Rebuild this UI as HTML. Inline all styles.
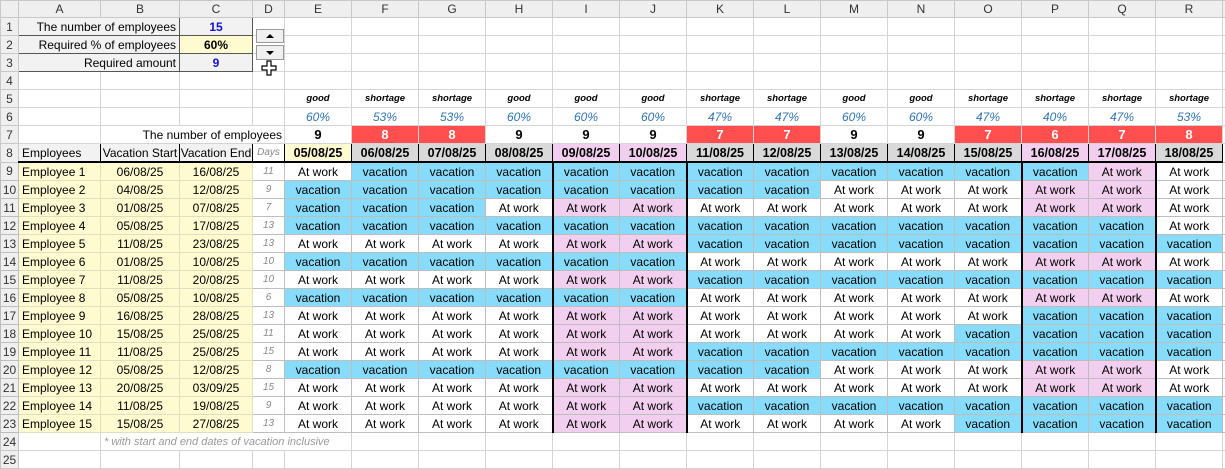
<!DOCTYPE html>
<html><head><meta charset="utf-8"><style>
body{margin:0;background:#fff;font-family:"Liberation Sans",Arial,sans-serif;overflow:hidden;width:1225px;height:457px;position:relative}
table{border-collapse:collapse;table-layout:fixed;position:absolute;left:0;top:0;width:1225px}
td{height:17px;padding:0;border:1px solid #d4d4d4;font-size:12px;text-align:center;white-space:nowrap;overflow:hidden;line-height:16px;color:#000}
tr.h td{height:16px;background:#efefef;color:#333;font-size:12px;border-color:#c8c8c8}
td.rh{background:#efefef;color:#333;text-align:center;padding:0;font-size:12px;border-color:#c8c8c8}
.v{background:#87dcfb}
.p{background:#f2cfee}
.y{background:#fffbd0}
.g{background:#f2f2f2}
.gd{background:#d9d9d9;font-weight:bold;font-size:12.5px}
.pd{background:#f2cfee;font-weight:bold;font-size:12.5px}
.yd{background:#fffbd0;font-weight:bold;font-size:12.5px}
.r{background:#ff4f4f;color:#fff;font-weight:bold;font-size:13px}
.n{font-weight:bold;font-size:13px}
.lab{font-weight:bold;font-style:italic;font-size:9.5px}
.pc{font-style:italic;color:#2f75b5;font-size:12px}
.dy{font-style:italic;color:#888;font-size:10px}
.emp td{border-color:#bdbdbd}
.emp td.y{border-color:#e0e0c0}
.emp td:nth-child(10),.emp td:nth-child(12),.emp td:nth-child(17),.emp td:nth-child(19){border-left:2px solid #000}
.b8 td{border-top:1px solid #000;border-bottom:2px solid #000;border-left:1px solid #000;border-right:1px solid #000}
.b8 td.rh{border:1px solid #c8c8c8}
.lft{text-align:left;padding-left:3px}
.rt{text-align:right;padding-right:3px}
.bx{border:1px solid #555}
</style></head><body>
<table>
<colgroup><col style="width:18px"><col style="width:82px"><col style="width:79px"><col style="width:73px"><col style="width:32px">
<col style="width:67px"><col style="width:67px"><col style="width:67px"><col style="width:67px"><col style="width:67px"><col style="width:67px"><col style="width:67px"><col style="width:67px"><col style="width:67px"><col style="width:67px"><col style="width:67px"><col style="width:67px"><col style="width:67px"><col style="width:67px"><col style="width:3px"></colgroup>
<tr class="h"><td></td><td>A</td><td>B</td><td>C</td><td>D</td><td>E</td><td>F</td><td>G</td><td>H</td><td>I</td><td>J</td><td>K</td><td>L</td><td>M</td><td>N</td><td>O</td><td>P</td><td>Q</td><td>R</td><td></td></tr>
<tr><td class="rh">1</td><td colspan="2" class="g rt bx">The number of employees</td><td class="g bx" style="color:#1010d0;font-weight:bold">15</td><td></td><td></td><td></td><td></td><td></td><td></td><td></td><td></td><td></td><td></td><td></td><td></td><td></td><td></td><td></td><td></td></tr>
<tr><td class="rh">2</td><td colspan="2" class="g rt bx">Required % of employees</td><td class="y bx" style="font-weight:bold">60%</td><td></td><td></td><td></td><td></td><td></td><td></td><td></td><td></td><td></td><td></td><td></td><td></td><td></td><td></td><td></td><td></td></tr>
<tr><td class="rh">3</td><td colspan="2" class="g rt bx">Required amount</td><td class="g bx" style="color:#1010d0;font-weight:bold">9</td><td></td><td></td><td></td><td></td><td></td><td></td><td></td><td></td><td></td><td></td><td></td><td></td><td></td><td></td><td></td><td></td></tr>
<tr><td class="rh">4</td><td></td><td></td><td></td><td></td><td></td><td></td><td></td><td></td><td></td><td></td><td></td><td></td><td></td><td></td><td></td><td></td><td></td><td></td><td></td></tr>
<tr><td class="rh">5</td><td></td><td></td><td></td><td></td><td class="lab">good</td><td class="lab">shortage</td><td class="lab">shortage</td><td class="lab">good</td><td class="lab">good</td><td class="lab">good</td><td class="lab">shortage</td><td class="lab">shortage</td><td class="lab">good</td><td class="lab">good</td><td class="lab">shortage</td><td class="lab">shortage</td><td class="lab">shortage</td><td class="lab">shortage</td><td></td></tr>
<tr><td class="rh">6</td><td></td><td></td><td></td><td></td><td class="pc">60%</td><td class="pc">53%</td><td class="pc">53%</td><td class="pc">60%</td><td class="pc">60%</td><td class="pc">60%</td><td class="pc">47%</td><td class="pc">47%</td><td class="pc">60%</td><td class="pc">60%</td><td class="pc">47%</td><td class="pc">40%</td><td class="pc">47%</td><td class="pc">53%</td><td></td></tr>
<tr><td class="rh">7</td><td></td><td colspan="3" class="rt" style="padding-right:2px">The number of employees</td><td class="n">9</td><td class="r">8</td><td class="r">8</td><td class="n">9</td><td class="n">9</td><td class="n">9</td><td class="r">7</td><td class="r">7</td><td class="n">9</td><td class="n">9</td><td class="r">7</td><td class="r">6</td><td class="r">7</td><td class="r">8</td><td></td></tr>
<tr class="b8"><td class="rh">8</td><td class="lft g">Employees</td><td class="g">Vacation Start</td><td class="g">Vacation End</td><td class="dy" style="background:#fff">Days</td><td class="yd">05/08/25</td><td class="gd">06/08/25</td><td class="gd">07/08/25</td><td class="gd">08/08/25</td><td class="pd">09/08/25</td><td class="pd">10/08/25</td><td class="gd">11/08/25</td><td class="gd">12/08/25</td><td class="gd">13/08/25</td><td class="gd">14/08/25</td><td class="gd">15/08/25</td><td class="pd">16/08/25</td><td class="pd">17/08/25</td><td class="gd">18/08/25</td><td style="border:none"></td></tr>
<tr class="emp"><td class="rh">9</td><td class="y lft">Employee 1</td><td class="y">06/08/25</td><td class="y">16/08/25</td><td class="dy">11</td><td>At work</td><td class="v">vacation</td><td class="v">vacation</td><td class="v">vacation</td><td class="v">vacation</td><td class="v">vacation</td><td class="v">vacation</td><td class="v">vacation</td><td class="v">vacation</td><td class="v">vacation</td><td class="v">vacation</td><td class="v">vacation</td><td class="p">At work</td><td>At work</td><td></td></tr>
<tr class="emp"><td class="rh">10</td><td class="y lft">Employee 2</td><td class="y">04/08/25</td><td class="y">12/08/25</td><td class="dy">9</td><td class="v">vacation</td><td class="v">vacation</td><td class="v">vacation</td><td class="v">vacation</td><td class="v">vacation</td><td class="v">vacation</td><td class="v">vacation</td><td class="v">vacation</td><td>At work</td><td>At work</td><td>At work</td><td class="p">At work</td><td class="p">At work</td><td>At work</td><td></td></tr>
<tr class="emp"><td class="rh">11</td><td class="y lft">Employee 3</td><td class="y">01/08/25</td><td class="y">07/08/25</td><td class="dy">7</td><td class="v">vacation</td><td class="v">vacation</td><td class="v">vacation</td><td>At work</td><td class="p">At work</td><td class="p">At work</td><td>At work</td><td>At work</td><td>At work</td><td>At work</td><td>At work</td><td class="p">At work</td><td class="p">At work</td><td>At work</td><td></td></tr>
<tr class="emp"><td class="rh">12</td><td class="y lft">Employee 4</td><td class="y">05/08/25</td><td class="y">17/08/25</td><td class="dy">13</td><td class="v">vacation</td><td class="v">vacation</td><td class="v">vacation</td><td class="v">vacation</td><td class="v">vacation</td><td class="v">vacation</td><td class="v">vacation</td><td class="v">vacation</td><td class="v">vacation</td><td class="v">vacation</td><td class="v">vacation</td><td class="v">vacation</td><td class="v">vacation</td><td>At work</td><td></td></tr>
<tr class="emp"><td class="rh">13</td><td class="y lft">Employee 5</td><td class="y">11/08/25</td><td class="y">23/08/25</td><td class="dy">13</td><td>At work</td><td>At work</td><td>At work</td><td>At work</td><td class="p">At work</td><td class="p">At work</td><td class="v">vacation</td><td class="v">vacation</td><td class="v">vacation</td><td class="v">vacation</td><td class="v">vacation</td><td class="v">vacation</td><td class="v">vacation</td><td class="v">vacation</td><td></td></tr>
<tr class="emp"><td class="rh">14</td><td class="y lft">Employee 6</td><td class="y">01/08/25</td><td class="y">10/08/25</td><td class="dy">10</td><td class="v">vacation</td><td class="v">vacation</td><td class="v">vacation</td><td class="v">vacation</td><td class="v">vacation</td><td class="v">vacation</td><td>At work</td><td>At work</td><td>At work</td><td>At work</td><td>At work</td><td class="p">At work</td><td class="p">At work</td><td>At work</td><td></td></tr>
<tr class="emp"><td class="rh">15</td><td class="y lft">Employee 7</td><td class="y">11/08/25</td><td class="y">20/08/25</td><td class="dy">10</td><td>At work</td><td>At work</td><td>At work</td><td>At work</td><td class="p">At work</td><td class="p">At work</td><td class="v">vacation</td><td class="v">vacation</td><td class="v">vacation</td><td class="v">vacation</td><td class="v">vacation</td><td class="v">vacation</td><td class="v">vacation</td><td class="v">vacation</td><td></td></tr>
<tr class="emp"><td class="rh">16</td><td class="y lft">Employee 8</td><td class="y">05/08/25</td><td class="y">10/08/25</td><td class="dy">6</td><td class="v">vacation</td><td class="v">vacation</td><td class="v">vacation</td><td class="v">vacation</td><td class="v">vacation</td><td class="v">vacation</td><td>At work</td><td>At work</td><td>At work</td><td>At work</td><td>At work</td><td class="p">At work</td><td class="p">At work</td><td>At work</td><td></td></tr>
<tr class="emp"><td class="rh">17</td><td class="y lft">Employee 9</td><td class="y">16/08/25</td><td class="y">28/08/25</td><td class="dy">13</td><td>At work</td><td>At work</td><td>At work</td><td>At work</td><td class="p">At work</td><td class="p">At work</td><td>At work</td><td>At work</td><td>At work</td><td>At work</td><td>At work</td><td class="v">vacation</td><td class="v">vacation</td><td class="v">vacation</td><td></td></tr>
<tr class="emp"><td class="rh">18</td><td class="y lft">Employee 10</td><td class="y">15/08/25</td><td class="y">25/08/25</td><td class="dy">11</td><td>At work</td><td>At work</td><td>At work</td><td>At work</td><td class="p">At work</td><td class="p">At work</td><td>At work</td><td>At work</td><td>At work</td><td>At work</td><td class="v">vacation</td><td class="v">vacation</td><td class="v">vacation</td><td class="v">vacation</td><td></td></tr>
<tr class="emp"><td class="rh">19</td><td class="y lft">Employee 11</td><td class="y">11/08/25</td><td class="y">25/08/25</td><td class="dy">15</td><td>At work</td><td>At work</td><td>At work</td><td>At work</td><td class="p">At work</td><td class="p">At work</td><td class="v">vacation</td><td class="v">vacation</td><td class="v">vacation</td><td class="v">vacation</td><td class="v">vacation</td><td class="v">vacation</td><td class="v">vacation</td><td class="v">vacation</td><td></td></tr>
<tr class="emp"><td class="rh">20</td><td class="y lft">Employee 12</td><td class="y">05/08/25</td><td class="y">12/08/25</td><td class="dy">8</td><td class="v">vacation</td><td class="v">vacation</td><td class="v">vacation</td><td class="v">vacation</td><td class="v">vacation</td><td class="v">vacation</td><td class="v">vacation</td><td class="v">vacation</td><td>At work</td><td>At work</td><td>At work</td><td class="p">At work</td><td class="p">At work</td><td>At work</td><td></td></tr>
<tr class="emp"><td class="rh">21</td><td class="y lft">Employee 13</td><td class="y">20/08/25</td><td class="y">03/09/25</td><td class="dy">15</td><td>At work</td><td>At work</td><td>At work</td><td>At work</td><td class="p">At work</td><td class="p">At work</td><td>At work</td><td>At work</td><td>At work</td><td>At work</td><td>At work</td><td class="p">At work</td><td class="p">At work</td><td>At work</td><td></td></tr>
<tr class="emp"><td class="rh">22</td><td class="y lft">Employee 14</td><td class="y">11/08/25</td><td class="y">19/08/25</td><td class="dy">9</td><td>At work</td><td>At work</td><td>At work</td><td>At work</td><td class="p">At work</td><td class="p">At work</td><td class="v">vacation</td><td class="v">vacation</td><td class="v">vacation</td><td class="v">vacation</td><td class="v">vacation</td><td class="v">vacation</td><td class="v">vacation</td><td class="v">vacation</td><td></td></tr>
<tr class="emp"><td class="rh">23</td><td class="y lft">Employee 15</td><td class="y">15/08/25</td><td class="y">27/08/25</td><td class="dy">13</td><td>At work</td><td>At work</td><td>At work</td><td>At work</td><td class="p">At work</td><td class="p">At work</td><td>At work</td><td>At work</td><td>At work</td><td>At work</td><td class="v">vacation</td><td class="v">vacation</td><td class="v">vacation</td><td class="v">vacation</td><td></td></tr>
<tr><td class="rh">24</td><td></td><td colspan="4" class="lft" style="font-style:italic;color:#999;font-size:11px">* with start and end dates of vacation inclusive</td><td></td><td></td><td></td><td></td><td></td><td></td><td></td><td></td><td></td><td></td><td></td><td></td><td></td><td></td></tr>
<tr><td class="rh">25</td><td></td><td></td><td></td><td></td><td></td><td></td><td></td><td></td><td></td><td></td><td></td><td></td><td></td><td></td><td></td><td></td><td></td><td></td><td></td></tr>
</table>
<div style="position:absolute;left:256px;top:29px;width:28px;height:14px;background:#f0f0f0;border:1px solid #999;box-sizing:border-box"><div style="margin:4px auto 0;width:0;height:0;border-left:4px solid transparent;border-right:4px solid transparent;border-bottom:4px solid #000"></div></div>
<div style="position:absolute;left:256px;top:45px;width:28px;height:15px;background:#f0f0f0;border:1px solid #999;box-sizing:border-box"><div style="margin:5px auto 0;width:0;height:0;border-left:4px solid transparent;border-right:4px solid transparent;border-top:4px solid #000"></div></div>
<svg style="position:absolute;left:261px;top:60px" width="16" height="16" viewBox="0 0 16 16"><path d="M6 1h4v5h5v4h-5v5H6v-5H1V6h5z" fill="#fff" stroke="#000" stroke-width="1.2"/></svg>
</body></html>
